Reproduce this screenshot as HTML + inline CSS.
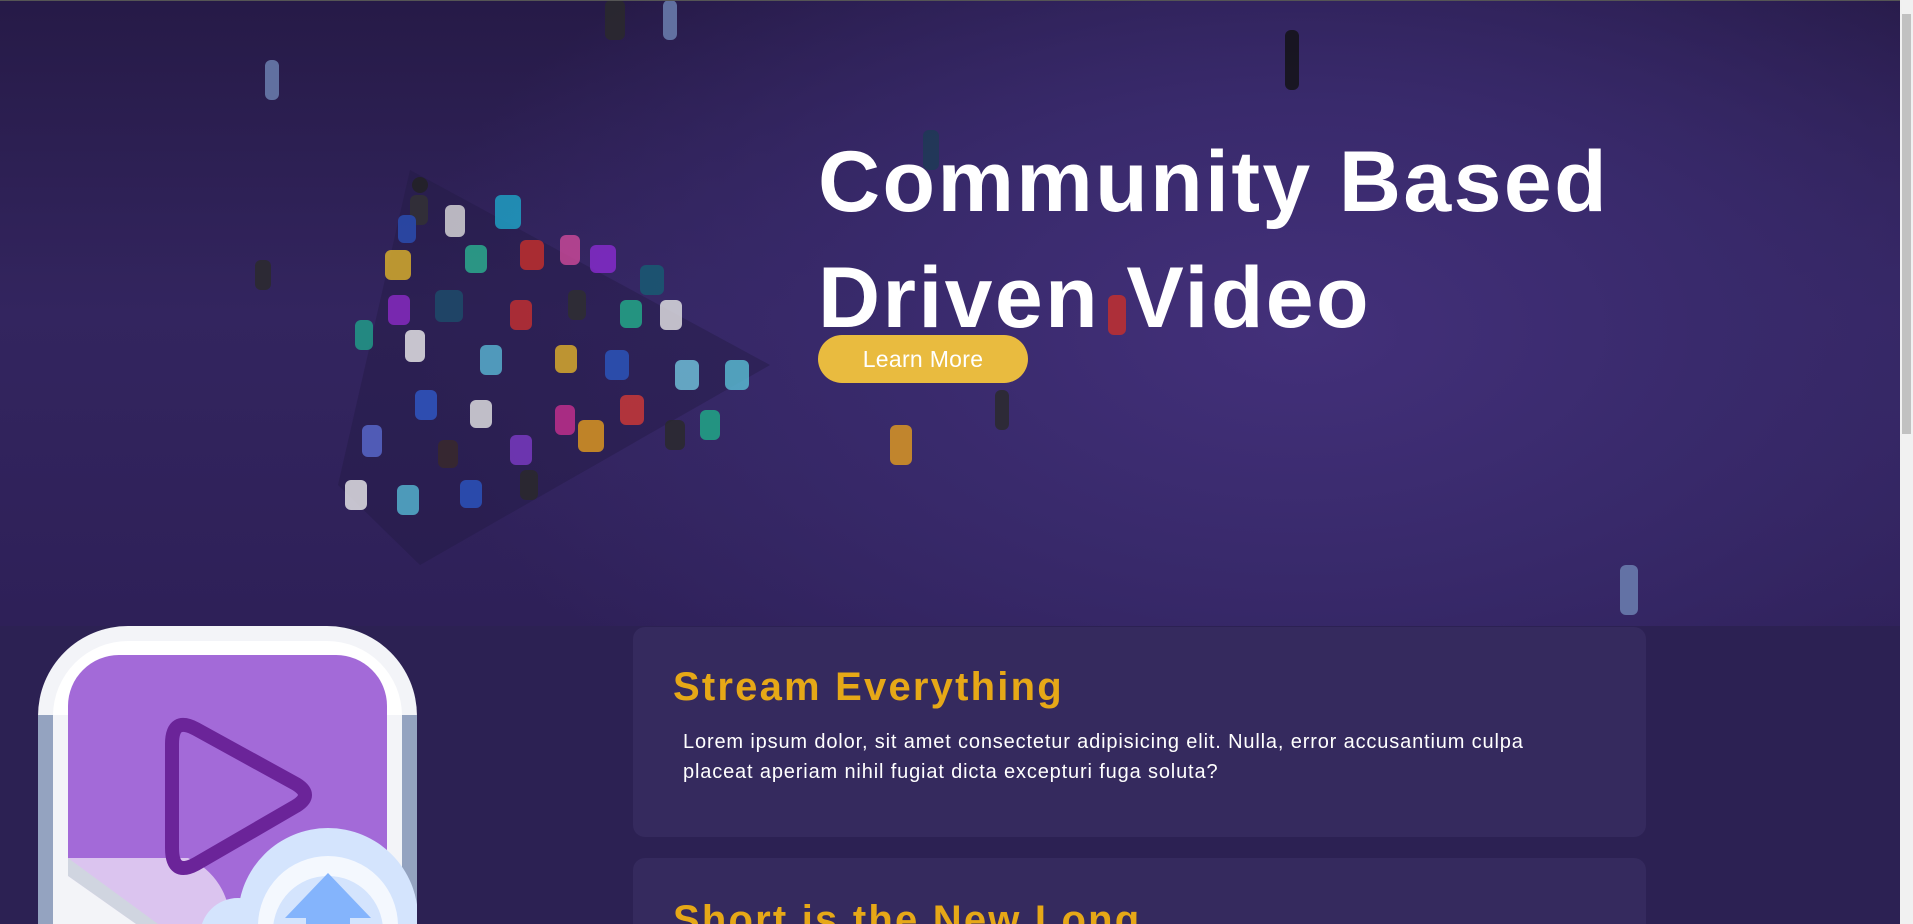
<!DOCTYPE html>
<html><head><meta charset="utf-8"><style>
*{margin:0;padding:0;box-sizing:border-box}
html,body{width:1913px;height:924px;overflow:hidden;background:#2c2153;font-family:"Liberation Sans",sans-serif;position:relative}
.hero{position:absolute;left:0;top:0;width:1900px;height:626px;background:radial-gradient(ellipse 900px 500px at 1300px 330px,#43307a 0%,#392a6c 45%,rgba(45,31,84,0) 100%),linear-gradient(180deg,#261a47 0%,#33255f 50%,#2e2058 100%)}
.topline{position:absolute;left:0;top:0;width:1913px;height:1px;background:#555}
h1{position:absolute;left:818px;top:124px;color:#fff;font-size:86px;font-weight:bold;line-height:116px;letter-spacing:2.4px;white-space:nowrap}
.btn{position:absolute;left:818px;top:335px;width:210px;height:48px;border-radius:24px;background:#e9bb3f;color:#fff;font-size:23px;text-align:center;line-height:48px;letter-spacing:.3px}
.card{position:absolute;left:633px;width:1013px;background:#352a5e;border-radius:12px;overflow:hidden}
.card h2{position:absolute;left:40px;top:38px;color:#e6a817;font-size:40px;font-weight:bold;letter-spacing:2.2px;white-space:nowrap}
.card p{position:absolute;left:50px;top:100px;width:870px;color:#fff;font-size:20px;line-height:30px;letter-spacing:.85px}
.sb{position:absolute;left:1900px;top:0;width:13px;height:924px;background:#f1f1f1}
.sb i{position:absolute;left:2px;top:14px;width:9px;height:420px;background:#c1c1c1}
</style></head><body>
<div class="hero"></div>
<svg style="position:absolute;left:0;top:0" width="1900" height="626">
<polygon points="410,170 770,365 420,565 338,485" fill="#241a45" opacity=".45"/>
<g opacity=".8">
<circle cx="420" cy="185" r="8" fill="#222"/><rect x="410" y="195" width="18" height="30" rx="6" fill="#333"/>
<rect x="398" y="215" width="18" height="28" rx="6" fill="#2a4fb5"/>
<rect x="445" y="205" width="20" height="32" rx="6" fill="#ddd"/>
<rect x="495" y="195" width="26" height="34" rx="6" fill="#1ea6c9"/>
<rect x="385" y="250" width="26" height="30" rx="6" fill="#e0b42a"/>
<rect x="465" y="245" width="22" height="28" rx="6" fill="#2bb391"/>
<rect x="520" y="240" width="24" height="30" rx="6" fill="#c9302b"/>
<rect x="560" y="235" width="20" height="30" rx="6" fill="#cf4a9a"/>
<rect x="590" y="245" width="26" height="28" rx="6" fill="#8a2bd0"/>
<rect x="640" y="265" width="24" height="30" rx="6" fill="#175d73"/>
<rect x="388" y="295" width="22" height="30" rx="6" fill="#8c2ac7"/>
<rect x="435" y="290" width="28" height="32" rx="6" fill="#1d4e6b"/>
<rect x="510" y="300" width="22" height="30" rx="6" fill="#c8302f"/>
<rect x="568" y="290" width="18" height="30" rx="6" fill="#2f2f2f"/>
<rect x="620" y="300" width="22" height="28" rx="6" fill="#22b08b"/>
<rect x="660" y="300" width="22" height="30" rx="6" fill="#e6e6e6"/>
<rect x="355" y="320" width="18" height="30" rx="6" fill="#20a18a"/>
<rect x="405" y="330" width="20" height="32" rx="6" fill="#eee"/>
<rect x="480" y="345" width="22" height="30" rx="6" fill="#5ab8d5"/>
<rect x="555" y="345" width="22" height="28" rx="6" fill="#e2b22a"/>
<rect x="605" y="350" width="24" height="30" rx="6" fill="#2b57c0"/>
<rect x="675" y="360" width="24" height="30" rx="6" fill="#72c6de"/>
<rect x="725" y="360" width="24" height="30" rx="6" fill="#5ac0d6"/>
<rect x="415" y="390" width="22" height="30" rx="6" fill="#2f59c8"/>
<rect x="470" y="400" width="22" height="28" rx="6" fill="#e6e6e6"/>
<rect x="555" y="405" width="20" height="30" rx="6" fill="#c72f8f"/>
<rect x="578" y="420" width="26" height="32" rx="6" fill="#e49c1e"/>
<rect x="620" y="395" width="24" height="30" rx="6" fill="#d33a36"/>
<rect x="665" y="420" width="20" height="30" rx="6" fill="#2a2a2a"/>
<rect x="700" y="410" width="20" height="30" rx="6" fill="#1fae88"/>
<rect x="362" y="425" width="20" height="32" rx="6" fill="#5a6bd0"/>
<rect x="510" y="435" width="22" height="30" rx="6" fill="#7d3bc6"/>
<rect x="345" y="480" width="22" height="30" rx="6" fill="#ececec"/>
<rect x="397" y="485" width="22" height="30" rx="6" fill="#56b9d5"/>
<rect x="460" y="480" width="22" height="28" rx="6" fill="#2b56c2"/>
<rect x="520" y="470" width="18" height="30" rx="6" fill="#2a2a2a"/>
<rect x="438" y="440" width="20" height="28" rx="6" fill="#3a2a2a"/>
<rect x="255" y="260" width="16" height="30" rx="6" fill="#2b2b2b"/>
<rect x="265" y="60" width="14" height="40" rx="6" fill="#6f86b5"/>
<rect x="1285" y="30" width="14" height="60" rx="6" fill="#111"/>
<rect x="923" y="130" width="16" height="40" rx="6" fill="#1d3b55"/>
<rect x="1108" y="295" width="18" height="40" rx="6" fill="#c9302b"/>
<rect x="890" y="425" width="22" height="40" rx="6" fill="#e49c1e"/>
<rect x="995" y="390" width="14" height="40" rx="6" fill="#2a2a2a"/>
<rect x="605" y="0" width="20" height="40" rx="6" fill="#2a2a2a"/>
<rect x="663" y="0" width="14" height="40" rx="6" fill="#6f86b5"/>
<rect x="1620" y="565" width="18" height="50" rx="6" fill="#6f86b5"/>
</g>
</svg>
<div class="topline"></div>
<h1>Community Based<br>Driven Video</h1>
<div class="btn">Learn More</div>
<div class="card" style="top:627px;height:210px"><h2>Stream Everything</h2><p>Lorem ipsum dolor, sit amet consectetur adipisicing elit. Nulla, error accusantium culpa placeat aperiam nihil fugiat dicta excepturi fuga soluta?</p></div>
<div class="card" style="top:858px;height:66px;border-radius:12px 12px 0 0"><h2 style="top:40px">Short is the New Long</h2></div>
<svg style="position:absolute;left:38px;top:626px" width="379" height="298" viewBox="0 0 379 298">
<path d="M0,298 V90 A90,90 0 0 1 90,0 H289 A90,90 0 0 1 379,90 V298Z" fill="#f3f4f8"/>
<rect x="0" y="89" width="15" height="209" fill="#94a3c0"/><rect x="364" y="89" width="15" height="209" fill="#94a3c0"/>
<path d="M15,298 V90 A75,75 0 0 1 90,15 H289 A75,75 0 0 1 364,90 V298Z" fill="#fff"/>
<rect x="15" y="89" width="15" height="209" fill="#f3f4f8"/><rect x="349" y="89" width="15" height="209" fill="#f3f4f8"/>
<path d="M30,298 V80 A51,51 0 0 1 81,29 H298 A51,51 0 0 1 349,80 V298Z" fill="#a36ad8"/>
<path d="M30,232 H150 A70,70 0 0 1 192,298 H30Z" fill="#dbc4ef"/>
<path d="M30,232 L30,250 L98,298 L120,298Z" fill="#d0d5e0"/>
<path d="M30,250 L98,298 H30Z" fill="#f3f4f8"/>
<path d="M134,118 Q134,90 158,103 L258,158 Q276,169 258,180 L158,238 Q134,251 134,222Z" fill="none" stroke="#6b2499" stroke-width="14" stroke-linejoin="round"/>
<circle cx="290" cy="292" r="90" fill="#d4e4fd"/>
<circle cx="200" cy="310" r="38" fill="#d4e4fd"/>
<circle cx="290" cy="300" r="70" fill="#f4f8fe"/>
<circle cx="290" cy="305" r="55" fill="#d4e4fd"/>
<path d="M290,247 L333,292 H312 V298 H268 V292 H247Z" fill="#84b4fc"/>
</svg>
<div class="sb"><i></i></div>
</body></html>
